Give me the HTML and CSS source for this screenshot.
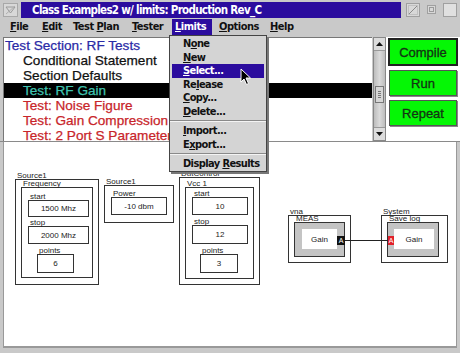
FILE: index.html
```html
<!DOCTYPE html>
<html>
<head>
<meta charset="utf-8">
<link rel="stylesheet" href="styles.css">
</head>
<body>
<div class="win">
  <div class="titlebar">
    <svg class="wbox collapse" width="15" height="14" viewBox="0 0 15 14">
      <rect x="0.5" y="0.5" width="14" height="13" fill="#d8d8d8" stroke="#a8a8a8"/>
      <path d="M3 4 L12 4 L7.5 10 Z" fill="none" stroke="#9a9a9a"/>
      <line x1="3" y1="11" x2="12" y2="3" stroke="#b0b0b0"/>
    </svg>
    <div class="title">Class Examples2 w/ limits: Production Rev_C</div>
    <div class="tright">
      <svg width="14" height="14" viewBox="0 0 14 14">
        <rect x="0.5" y="0.5" width="13" height="13" fill="#d8d8d8" stroke="#a0a0a0"/>
        <line x1="2" y1="12" x2="12" y2="2" stroke="#8a8a8a"/>
        <rect x="2.5" y="2.5" width="9" height="9" fill="none" stroke="#c0c0c0"/>
      </svg>
      <svg width="9" height="9" viewBox="0 0 9 9">
        <rect x="0.5" y="0.5" width="8" height="8" fill="#d8d8d8" stroke="#a0a0a0"/>
        <rect x="2.5" y="2.5" width="4" height="4" fill="none" stroke="#9a9a9a"/>
      </svg>
      <svg width="14" height="14" viewBox="0 0 14 14">
        <rect x="0.5" y="0.5" width="13" height="13" fill="#e0e0e0" stroke="#a0a0a0"/>
      </svg>
    </div>
  </div>

  <div class="menubar">
    <span class="mi mi-file"><u>F</u>ile</span>
    <span class="mi mi-edit"><u>E</u>dit</span>
    <span class="mi mi-plan">Test <u>P</u>lan</span>
    <span class="mi mi-tester"><u>T</u>ester</span>
    <span class="mi mi-limits active"><u>L</u>imits</span>
    <span class="mi mi-options"><u>O</u>ptions</span>
    <span class="mi mi-help"><u>H</u>elp</span>
  </div>

  <div class="top">
    <div class="list">
      <div class="row sec">Test Section: RF Tests</div>
      <div class="row sub">Conditional Statement</div>
      <div class="row sub">Section Defaults</div>
      <div class="row sub sel">Test: RF Gain</div>
      <div class="row sub red">Test: Noise Figure</div>
      <div class="row sub red">Test: Gain Compression</div>
      <div class="row sub red">Test: 2 Port S Parameters</div>
    </div>
    <div class="scroll">
      <div class="sarrow"><svg width="7" height="4" viewBox="0 0 7 4"><path d="M3.5 0 L7 4 L0 4 Z" fill="#111"/></svg></div>
      <div class="strack">
        <div class="thumb"><i></i><i></i><i></i><i></i></div>
      </div>
      <div class="sarrow"><svg width="7" height="4" viewBox="0 0 7 4"><path d="M0 0 L7 0 L3.5 4 Z" fill="#111"/></svg></div>
    </div>
    <div class="btns">
      <div class="btn default">Compile</div>
      <div class="btn">Run</div>
      <div class="btn">Repeat</div>
    </div>
  </div>

  <div class="canvas">
    <div class="box" style="left:11px;top:37px;width:84px;height:106px"><span class="lbl">Source1</span></div>
    <div class="box" style="left:17px;top:45px;width:72px;height:91px"><span class="lbl">Frequency</span></div>
    <div class="box val" style="left:24px;top:58px;width:61px;height:17px"><span class="lbl">start</span>1500 Mhz</div>
    <div class="box val" style="left:24px;top:84px;width:61px;height:18px"><span class="lbl">stop</span>2000 Mhz</div>
    <div class="box val" style="left:33px;top:112px;width:37px;height:19px"><span class="lbl">points</span>6</div>

    <div class="box" style="left:100px;top:43px;width:70px;height:38px"><span class="lbl">Source1</span></div>
    <div class="box val" style="left:107px;top:55px;width:56px;height:18px"><span class="lbl">Power</span>-10 dbm</div>

    <div class="box" style="left:175px;top:35px;width:81px;height:108px"><span class="lbl">DutControl</span></div>
    <div class="box" style="left:181px;top:45px;width:69px;height:92px"><span class="lbl">Vcc 1</span></div>
    <div class="box val" style="left:188px;top:55px;width:56px;height:18px"><span class="lbl">start</span>10</div>
    <div class="box val" style="left:188px;top:83px;width:56px;height:19px"><span class="lbl">stop</span>12</div>
    <div class="box val" style="left:196px;top:112px;width:38px;height:19px"><span class="lbl">points</span>3</div>

    <div class="box" style="left:284px;top:73px;width:63px;height:48px"><span class="lbl">vna</span></div>
    <div class="box grey" style="left:290px;top:80px;width:51px;height:35px"><span class="lbl">MEAS</span></div>
    <div class="inner" style="left:298px;top:87px;width:35px;height:20px">Gain</div>
    <div class="port black" style="left:333px;top:94px;width:8px;height:9px">A</div>

    <div class="box" style="left:377px;top:73px;width:67px;height:48px"><span class="lbl">System</span></div>
    <div class="box grey" style="left:383px;top:80px;width:52px;height:35px"><span class="lbl">Save log</span></div>
    <div class="inner" style="left:390px;top:87px;width:40px;height:20px">Gain</div>
    <div class="port redp" style="left:384px;top:94px;width:6px;height:9px">A</div>
    <div class="wire" style="left:341px;top:98px;width:43px"></div>
  </div>

  <div class="dropdown">
    <div class="di">N<u>o</u>ne</div>
    <div class="di"><u>N</u>ew</div>
    <div class="di hi"><u>S</u>elect...</div>
    <div class="di">Re<u>l</u>ease</div>
    <div class="di"><u>C</u>opy...</div>
    <div class="di"><u>D</u>elete...</div>
    <div class="dsep"></div>
    <div class="di"><u>I</u>mport...</div>
    <div class="di">E<u>x</u>port...</div>
    <div class="dsep"></div>
    <div class="di">Display <u>R</u>esults</div>
  </div>

  <svg class="cursor" width="12" height="18" viewBox="0 0 12 18">
    <path d="M1 1 L1 14 L4 11 L6.5 16.5 L8.5 15.5 L6 10 L10.5 10 Z" fill="#000" stroke="#fff" stroke-width="1"/>
  </svg>
</div>
</body>
</html>
```

FILE: styles.css
```css
* { box-sizing: border-box; }
html, body { margin: 0; padding: 0; }
body {
  width: 460px;
  height: 353px;
  overflow: hidden;
  background: #c9c9c9;
  font-family: "Liberation Sans", Arial, sans-serif;
}
.win {
  position: relative;
  width: 460px;
  height: 353px;
  background: #c9c9c9;
}

/* title bar */
.titlebar {
  display: flex;
  align-items: center;
  height: 18px;
  padding: 1px 3px 0 3px;
}
.collapse { flex: none; }
.title {
  margin-left: 3px;
  width: 387px;
  height: 16px;
  background: #2b0c9e;
  color: #fff;
  font-family: "DejaVu Sans Condensed", "DejaVu Sans", sans-serif;
  font-weight: bold;
  font-size: 11.5px;
  letter-spacing: -0.7px;
  line-height: 16px;
  padding-left: 11px;
  white-space: nowrap;
  overflow: hidden;
}
.tright {
  display: flex;
  align-items: center;
  gap: 7px;
  margin-left: 5px;
}

/* menu bar */
.menubar {
  display: flex;
  height: 17px;
  margin-top: 1px;
  padding-left: 7px;
  font-family: "DejaVu Sans Condensed", "DejaVu Sans", sans-serif;
  font-weight: bold;
  font-size: 11px;
  letter-spacing: -0.5px;
  line-height: 16px;
  color: #111;
}
.mi { padding-left: 3px; white-space: nowrap; }
.mi-file { width: 32px; }
.mi-edit { width: 31px; }
.mi-plan { width: 59px; }
.mi-tester { width: 43px; }
.mi-limits { width: 40px; }
.mi-options { width: 55px; padding-left: 7px; }
.mi-help { width: 40px; }
.active { background: #2b0c9e; color: #fff; }
u { text-decoration: underline; text-underline-offset: 1px; }

/* top area */
.top {
  display: flex;
  height: 105px;
  margin-top: 1px;
  border-bottom: 1px solid #8a8a8a;
}
.list {
  margin-left: 3px;
  width: 369px;
  background: #fff;
  border-left: 1px solid #777;
  border-top: 1px solid #777;
  overflow: hidden;
  font-size: 13.6px;
  -webkit-text-stroke: 0.25px currentColor;
}
.row {
  height: 15px;
  line-height: 15px;
  white-space: nowrap;
}
.sec { padding-left: 1px; color: #2a2aa6; }
.sub { padding-left: 19px; color: #111; }
.sel { background: #000; color: #3fc3b0; }
.red { color: #c8252a; }

.scroll {
  width: 13px;
  margin-left: 1px;
  display: flex;
  flex-direction: column;
  background: #d0d0d0;
  border: 1px solid #888;
}
.sarrow {
  height: 13px;
  display: flex;
  align-items: center;
  justify-content: center;
  background: #dcdcdc;
  border-bottom: 1px solid #999;
}
.sarrow:last-child { border-bottom: none; border-top: 1px solid #999; }
.strack {
  flex: 1;
  background: linear-gradient(90deg, #bdbdbd, #dadada 50%, #bdbdbd);
  padding-top: 35px;
}
.thumb {
  height: 17px;
  margin: 0 1px;
  background: #d6d6d6;
  border: 1px solid #777;
  display: flex;
  flex-direction: column;
  justify-content: center;
  gap: 1px;
  padding: 0 2px;
}
.thumb i { display: block; height: 1px; background: #777; }

.btns {
  width: 74px;
  background: #fff;
  display: flex;
  flex-direction: column;
  padding: 1px 2px 0 2px;
}
.btn {
  height: 26px;
  margin: 2px 1px 2px 1px;
  background: #05f705;
  border: 1px solid #555;
  box-shadow: 1px 1px 0 #888;
  color: #143314;
  font-size: 13px;
  -webkit-text-stroke: 0.3px #143314;
  display: flex;
  align-items: center;
  justify-content: center;
}
.btn.default {
  height: 28px;
  margin: 0 0 2px 0;
  border: 2px solid #222;
  box-shadow: none;
}

/* canvas */
.canvas {
  position: relative;
  height: 206px;
  margin: 0 3px 0 3px;
  background: #fff;
  border-left: 1px solid #999;
  border-right: 1px solid #999;
  border-bottom: 2px solid #999;
  font-size: 8px;
  color: #222;
}
.box {
  position: absolute;
  border: 1px solid #333;
}
.box.val {
  display: flex;
  align-items: center;
  justify-content: center;
}
.box.grey { background: #c4c4c4; }
.lbl {
  position: absolute;
  left: 1px;
  bottom: 100%;
  line-height: 8px;
  white-space: nowrap;
  color: #222;
}
.inner {
  position: absolute;
  background: #fff;
  display: flex;
  align-items: center;
  justify-content: center;
}
.port {
  position: absolute;
  color: #fff;
  font-size: 7px;
  line-height: 9px;
  text-align: center;
}
.port.black { background: #111; }
.port.redp { background: #e0202a; }
.wire {
  position: absolute;
  height: 1px;
  background: #222;
}

/* dropdown menu */
.dropdown {
  position: absolute;
  left: 169px;
  top: 35px;
  width: 98px;
  height: 137px;
  background: #d4d4d4;
  border: 1px solid #444;
  box-shadow: 2px 2px 0 #777;
  padding: 1px 2px;
  font-family: "DejaVu Sans Condensed", "DejaVu Sans", sans-serif;
  font-weight: bold;
  font-size: 11px;
  letter-spacing: -0.6px;
  color: #111;
}
.di {
  height: 13.5px;
  line-height: 13.5px;
  padding-left: 11px;
  white-space: nowrap;
}
.di.hi { background: #2b0c9e; color: #fff; }
.dsep {
  margin: 2px -2px 0 -2px;
  height: 4px;
  border-top: 1px solid #8a8a8a;
  box-shadow: inset 0 1px 0 #f4f4f4;
}
.cursor {
  position: absolute;
  left: 240px;
  top: 68px;
}
```
